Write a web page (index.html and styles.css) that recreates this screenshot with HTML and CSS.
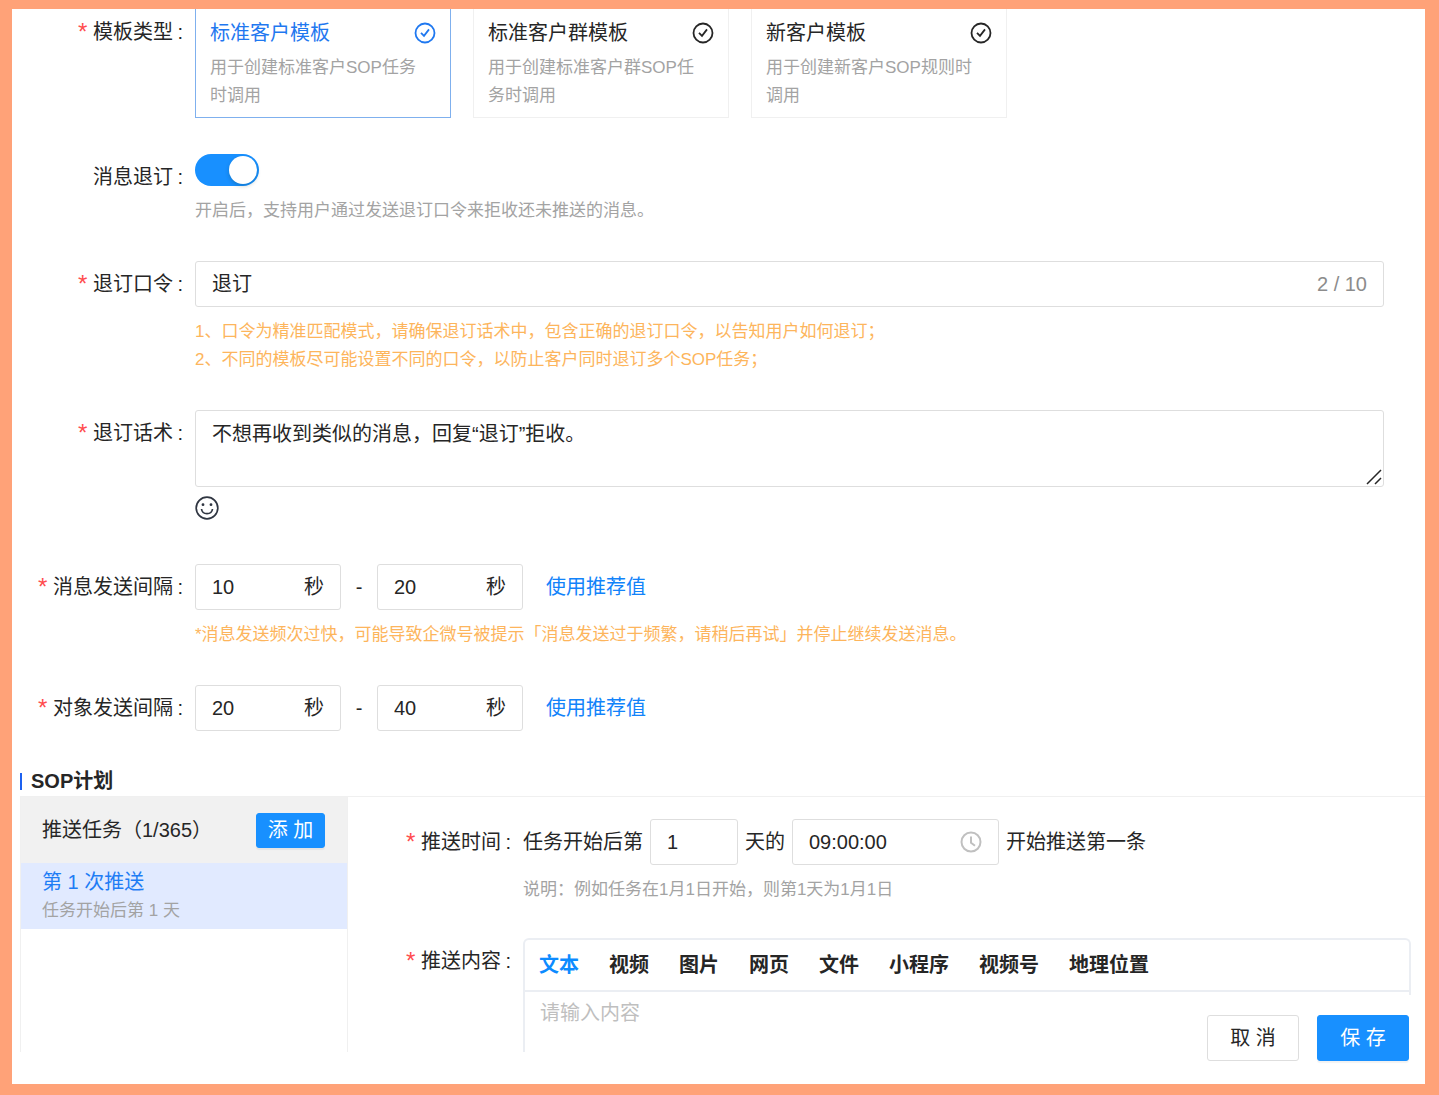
FILE: index.html
```html
<!DOCTYPE html>
<html lang="zh-CN">
<head>
    <meta charset="UTF-8">
    <meta name="viewport" content="width=device-width, initial-scale=1.0">
    <title>SOP模板</title>
    <link rel="stylesheet" href="styles.css">
</head>
<body>

    <form class="page">
        <!-- Template type -->
        <div class="row">
            <div class="label required">模板类型<span class="colon">:</span></div>
            <div class="cards">
                <label class="card active">
                    <input type="radio" name="type" checked>
                    <span class="card-title">标准客户模板
                        <svg width="22" height="22" viewBox="0 0 22 22"><circle cx="11" cy="11" r="9.5"/><path d="M7 10.8l3 3 5-6.4"/></svg>
                    </span>
                    <span class="card-desc">用于创建标准客户SOP任务时调用</span>
                </label>
                <label class="card">
                    <input type="radio" name="type">
                    <span class="card-title">标准客户群模板
                        <svg width="22" height="22" viewBox="0 0 22 22"><circle cx="11" cy="11" r="9.5"/><path d="M7 10.8l3 3 5-6.4"/></svg>
                    </span>
                    <span class="card-desc">用于创建标准客户群SOP任务时调用</span>
                </label>
                <label class="card">
                    <input type="radio" name="type">
                    <span class="card-title">新客户模板
                        <svg width="22" height="22" viewBox="0 0 22 22"><circle cx="11" cy="11" r="9.5"/><path d="M7 10.8l3 3 5-6.4"/></svg>
                    </span>
                    <span class="card-desc">用于创建新客户SOP规则时调用</span>
                </label>
            </div>
        </div>

        <!-- Unsubscribe switch -->
        <div class="row">
            <label class="label" for="unsub">消息退订<span class="colon">:</span></label>
            <div class="field">
                <input type="checkbox" id="unsub" class="switch" checked>
                <p class="hint">开启后，支持用户通过发送退订口令来拒收还未推送的消息。</p>
            </div>
        </div>

        <div class="row">
            <label class="label required" for="keyword">退订口令<span class="colon">:</span></label>
            <div class="field">
                <div class="input-box">
                    <input type="text" id="keyword" value="退订" maxlength="10">
                    <span class="count">2 / 10</span>
                </div>
                <p class="hint warn">1、口令为精准匹配模式，请确保退订话术中，包含正确的退订口令，以告知用户如何退订；<br>2、不同的模板尽可能设置不同的口令，以防止客户同时退订多个SOP任务；</p>
            </div>
        </div>

        <div class="row">
            <label class="label required" for="reply">退订话术<span class="colon">:</span></label>
            <div class="field">
                <div class="textarea-box">
                    <textarea id="reply">不想再收到类似的消息，回复“退订”拒收。</textarea>
                    <svg class="grip" width="16" height="16" viewBox="0 0 16 16"><path d="M1 15L15 1M9 15l6-6"/></svg>
                </div>
                <button type="button" class="emoji" aria-label="表情">
                    <svg width="24" height="24" viewBox="0 0 24 24"><circle cx="12" cy="12" r="10.8"/><path d="M6.5 13c.8 6.2 10.2 6.2 11 0"/><circle class="eye" cx="8" cy="8.7" r="1.4"/><circle class="eye" cx="16" cy="8.7" r="1.4"/></svg>
                </button>
            </div>
        </div>

        <!-- Intervals -->
        <div class="row">
            <label class="label required" for="msgMin">消息发送间隔<span class="colon">:</span></label>
            <div class="field">
                <div class="range">
                    <div class="input-box seconds"><input type="text" id="msgMin" value="10"><span>秒</span></div>
                    <span class="dash">-</span>
                    <div class="input-box seconds"><input type="text" value="20" aria-label="最大消息间隔"><span>秒</span></div>
                    <a href="#">使用推荐值</a>
                </div>
                <p class="hint warn">*消息发送频次过快，可能导致企微号被提示「消息发送过于频繁，请稍后再试」并停止继续发送消息。</p>
            </div>
        </div>

        <div class="row">
            <label class="label required" for="objMin">对象发送间隔<span class="colon">:</span></label>
            <div class="field">
                <div class="range">
                    <div class="input-box seconds"><input type="text" id="objMin" value="20"><span>秒</span></div>
                    <span class="dash">-</span>
                    <div class="input-box seconds"><input type="text" value="40" aria-label="最大对象间隔"><span>秒</span></div>
                    <a href="#">使用推荐值</a>
                </div>
            </div>
        </div>

        <!-- SOP plan -->
        <h2>SOP计划</h2>
        <div class="plan">
            <div class="tasks">
                <div class="tasks-head">
                    <span>推送任务（1/365）</span>
                    <button type="button" class="btn primary small">添 加</button>
                </div>
                <div class="task">
                    <div class="task-name">第 1 次推送</div>
                    <div class="task-day">任务开始后第 1 天</div>
                </div>
            </div>

            <div class="detail">
                <div class="row">
                    <label class="label required" for="day">推送时间<span class="colon">:</span></label>
                    <div class="field">
                        <div class="when">
                            <span>任务开始后第</span>
                            <div class="input-box day"><input type="text" id="day" value="1"></div>
                            <span>天的</span>
                            <div class="input-box time">
                                <input type="text" value="09:00:00" aria-label="时间">
                                <svg width="22" height="22" viewBox="0 0 22 22"><circle cx="11" cy="11" r="9.5"/><path d="M11 5.5v6.2l4 3"/></svg>
                            </div>
                            <span>开始推送第一条</span>
                        </div>
                        <p class="hint">说明：例如任务在1月1日开始，则第1天为1月1日</p>
                    </div>
                </div>
                <div class="row grow">
                    <label class="label required" for="content">推送内容<span class="colon">:</span></label>
                    <div class="editor">
                        <div class="tabs">
                            <button type="button" class="active">文本</button>
                            <button type="button">视频</button>
                            <button type="button">图片</button>
                            <button type="button">网页</button>
                            <button type="button">文件</button>
                            <button type="button">小程序</button>
                            <button type="button">视频号</button>
                            <button type="button">地理位置</button>
                        </div>
                        <textarea id="content" placeholder="请输入内容"></textarea>
                    </div>
                </div>
            </div>
        </div>

        <div class="footer">
            <button type="button" class="btn">取 消</button>
            <button type="submit" class="btn primary">保 存</button>
        </div>
    </form>

</body>
</html>
```
FILE: styles.css
```css
* {
    box-sizing: border-box;
}
body {
    margin: 0;
    padding: 9px 14px 11px 12px;
    min-height: 100vh;
    display: flex;
    background: #ffa278;
    color: #262626;
    font-family: "Liberation Sans", "Noto Sans CJK SC", sans-serif;
    font-size: 20px;
    line-height: 30px;
}
input, textarea, button {
    font: inherit;
    color: inherit;
    border: none;
    outline: none;
    background: none;
    padding: 0;
    margin: 0;
}
button {
    cursor: pointer;
}
svg {
    fill: none;
    stroke: currentColor;
    stroke-width: 2;
    flex-shrink: 0;
}
a {
    color: #1283fa;
    text-decoration: none;
}
.page {
    position: relative;
    flex: 1;
    min-width: 0;
    display: flex;
    flex-direction: column;
    background: white;
    padding-bottom: 32px;
}

/* form rows */
.row {
    display: grid;
    grid-template-columns: 183px 1fr;
    padding-right: 41px;
    margin-bottom: 36px;
}
.label {
    display: flex;
    justify-content: flex-end;
    padding-right: 12px;
    line-height: 46px;
    height: 46px;
}
.required::before {
    content: "*";
    color: #ff4d4f;
    font-family: "Liberation Mono", monospace;
    font-size: 24px;
    margin-right: 3px;
    padding-top: 3px;
}
.colon {
    width: 10px;
    text-align: right;
}
.field {
    min-width: 0;
}
.hint {
    margin: 11px 0 0;
    font-size: 17px;
    line-height: 28px;
    color: #a3a3a3;
}
.warn {
    color: #fdb55c;
}

/* template cards */
.cards {
    display: flex;
    gap: 22px;
}
.card {
    width: 256px;
    padding: 8px 14px 7px;
    border: 1px solid #f0f0f0;
    border-top: none;
    cursor: pointer;
}
.card input {
    position: absolute;
    opacity: 0;
}
.card-title {
    display: flex;
    justify-content: space-between;
    align-items: center;
    line-height: 32px;
    margin-bottom: 5px;
}
.card-desc {
    display: block;
    padding-right: 8px;
    font-size: 17px;
    line-height: 28px;
    color: #a3a3a3;
}
.card.active {
    border-color: #7fb0ee;
}
.card.active .card-title {
    color: #1f78f0;
}
.cards svg {
    stroke-width: 1.8;
}

/* switch */
.switch {
    appearance: none;
    display: block;
    position: relative;
    width: 64px;
    height: 32px;
    border-radius: 16px;
    background: #1890ff;
    cursor: pointer;
}
.switch::after {
    content: "";
    position: absolute;
    top: 2px;
    right: 2px;
    width: 28px;
    height: 28px;
    border-radius: 50%;
    background: white;
    box-shadow: 0 2px 4px rgba(0, 35, 11, 0.2);
}

/* inputs */
.input-box {
    display: flex;
    align-items: center;
    height: 46px;
    padding: 0 16px;
    border: 1px solid #dedede;
    border-radius: 3px;
}
.input-box input {
    flex: 1;
    min-width: 0;
    width: 100%;
}
.count {
    color: #8c8c8c;
}
.textarea-box {
    position: relative;
    height: 77px;
    border: 1px solid #dedede;
    border-radius: 3px;
}
.textarea-box textarea {
    display: block;
    width: 100%;
    height: 100%;
    padding: 8px 16px;
    resize: none;
}
.grip {
    position: absolute;
    right: 1px;
    bottom: 1px;
    stroke-width: 1.5;
}
.emoji {
    display: block;
    height: 41px;
}
.emoji svg {
    display: block;
    color: #303642;
    stroke-width: 1.7;
}
.emoji .eye {
    fill: currentColor;
    stroke: none;
}
.range {
    display: flex;
    align-items: center;
}
.seconds {
    width: 146px;
}
.dash {
    width: 36px;
    text-align: center;
}
.range a {
    margin-left: 23px;
}

/* SOP plan */
h2 {
    display: flex;
    align-items: center;
    gap: 9px;
    margin: 0 0 0 8px;
    font-size: 20px;
    line-height: 29px;
}
h2::before {
    content: "";
    width: 2px;
    height: 17px;
    background: #1d61f0;
}
.plan {
    flex: 1;
    display: flex;
    min-height: 240px;
    margin-left: 8px;
    border-top: 1px solid #f0f0f0;
}
.tasks {
    width: 328px;
    border-left: 1px solid #f0f0f0;
    border-right: 1px solid #f0f0f0;
}
.tasks-head {
    display: flex;
    justify-content: space-between;
    align-items: center;
    height: 66px;
    padding: 0 22px 0 21px;
    background: #f1f1f1;
}
.task {
    padding: 4px 21px;
    background: #e1eaff;
}
.task-name {
    color: #1f7df5;
}
.task-day {
    font-size: 17px;
    line-height: 28px;
    color: #a3a3a3;
}
.detail {
    flex: 1;
    min-width: 0;
    display: flex;
    flex-direction: column;
    padding-top: 22px;
}
.detail .row {
    grid-template-columns: 175px 1fr;
    padding-right: 14px;
    margin-bottom: 34px;
}
.detail .grow {
    flex: 1;
    margin-bottom: 0;
}
.when {
    display: flex;
    align-items: center;
    gap: 7px;
}
.day {
    width: 88px;
}
.time {
    width: 207px;
}
.time svg {
    color: #c0c0c0;
}
.editor {
    display: flex;
    flex-direction: column;
    border: 2px solid #ebeef3;
    border-bottom: none;
    border-radius: 6px 6px 0 0;
}
.tabs {
    display: flex;
    gap: 30px;
    padding: 0 14px;
    border-bottom: 2px solid #ebeef3;
}
.tabs button {
    height: 50px;
    font-weight: bold;
}
.tabs .active {
    color: #0d8bff;
}
.editor textarea {
    flex: 1 1 40px;
    min-height: 0;
    padding: 6px 15px;
    resize: none;
}
.editor textarea::placeholder {
    color: #bfbfbf;
}

/* buttons */
.btn {
    width: 92px;
    height: 46px;
    border: 1px solid #dedede;
    border-radius: 3px;
    background: white;
}
.primary {
    border-color: #1890ff;
    background: #1890ff;
    color: white;
    box-shadow: 0 2px 1px rgba(0, 0, 0, 0.05);
}
.small {
    width: 69px;
    height: 35px;
}
.footer {
    position: absolute;
    right: 0;
    bottom: 0;
    display: flex;
    gap: 18px;
    padding: 20px 16px 23px;
    background: white;
}
```
